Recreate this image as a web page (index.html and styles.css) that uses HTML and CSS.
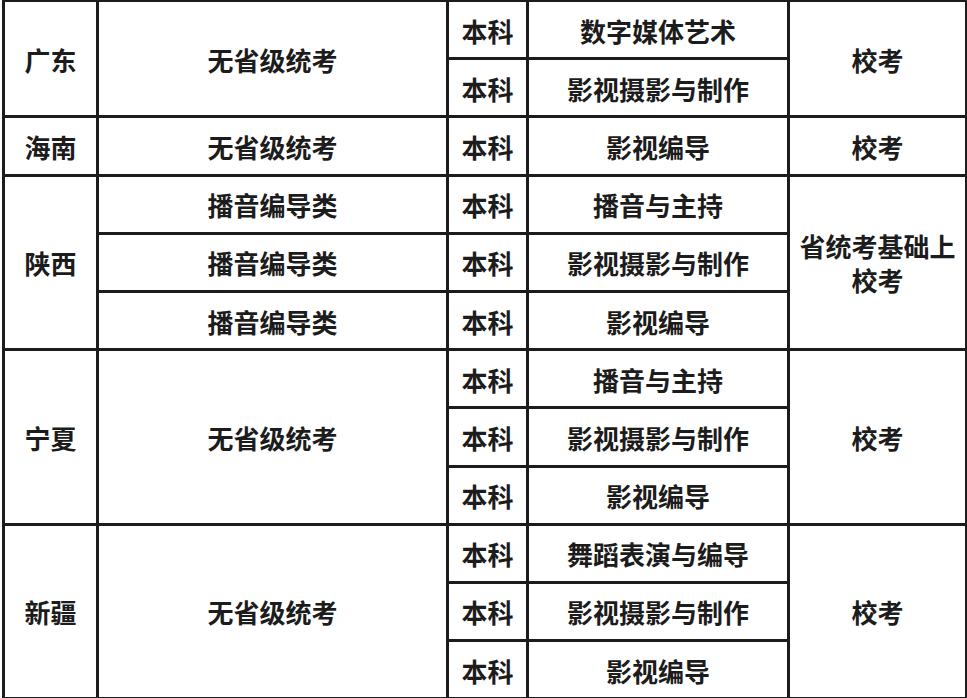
FILE: index.html
```html
<!DOCTYPE html>
<html lang="zh-CN">
<head>
<meta charset="utf-8">
<link rel="stylesheet" href="styles.css">
</head>
<body>
<table class="grid">
  <colgroup>
    <col class="c-prov">
    <col class="c-exam">
    <col class="c-level">
    <col class="c-major">
    <col class="c-type">
  </colgroup>
  <tr>
    <td rowspan="2" class="grp">广东</td>
    <td rowspan="2" class="grp">无省级统考</td>
    <td class="grp">本科</td>
    <td class="grp">数字媒体艺术</td>
    <td rowspan="2" class="grp">校考</td>
  </tr>
  <tr>
    <td>本科</td>
    <td>影视摄影与制作</td>
  </tr>
  <tr>
    <td class="grp">海南</td>
    <td class="grp">无省级统考</td>
    <td class="grp">本科</td>
    <td class="grp">影视编导</td>
    <td class="grp">校考</td>
  </tr>
  <tr>
    <td rowspan="3" class="grp">陕西</td>
    <td class="grp">播音编导类</td>
    <td class="grp">本科</td>
    <td class="grp">播音与主持</td>
    <td rowspan="3" class="grp two"><span class="ln">省统考基础上</span><span class="ln">校考</span></td>
  </tr>
  <tr>
    <td>播音编导类</td>
    <td>本科</td>
    <td>影视摄影与制作</td>
  </tr>
  <tr>
    <td>播音编导类</td>
    <td>本科</td>
    <td>影视编导</td>
  </tr>
  <tr>
    <td rowspan="3" class="grp">宁夏</td>
    <td rowspan="3" class="grp">无省级统考</td>
    <td class="grp">本科</td>
    <td class="grp">播音与主持</td>
    <td rowspan="3" class="grp">校考</td>
  </tr>
  <tr>
    <td>本科</td>
    <td>影视摄影与制作</td>
  </tr>
  <tr>
    <td>本科</td>
    <td>影视编导</td>
  </tr>
  <tr>
    <td rowspan="3" class="grp">新疆</td>
    <td rowspan="3" class="grp">无省级统考</td>
    <td class="grp">本科</td>
    <td class="grp">舞蹈表演与编导</td>
    <td rowspan="3" class="grp">校考</td>
  </tr>
  <tr>
    <td>本科</td>
    <td>影视摄影与制作</td>
  </tr>
  <tr>
    <td>本科</td>
    <td>影视编导</td>
  </tr>
</table>
</body>
</html>
```

FILE: styles.css
```css
html, body {
  margin: 0;
  padding: 0;
  background: #ffffff;
}

body {
  font-family: "Noto Sans CJK SC", "Noto Sans", sans-serif;
  color: #1c1c1c;
  overflow: hidden;
}

.grid {
  border-collapse: collapse;
  table-layout: fixed;
  width: 963px;
  margin: -1px 0 0 2px;
}

.c-prov { width: 94px; }
.c-exam { width: 350px; }
.c-level { width: 80px; }
.c-major { width: 261px; }
.c-type { width: 178px; }

.grid tr {
  height: 58.2px;
}

.grid td {
  border: 3px solid #1c1c1c;
  padding: 2px 0 0;
  text-align: center;
  vertical-align: middle;
  font-size: 26px;
  font-weight: 700;
  line-height: 30px;
  white-space: nowrap;
}

.grid td.two .ln {
  display: block;
  line-height: 34px;
}
```
